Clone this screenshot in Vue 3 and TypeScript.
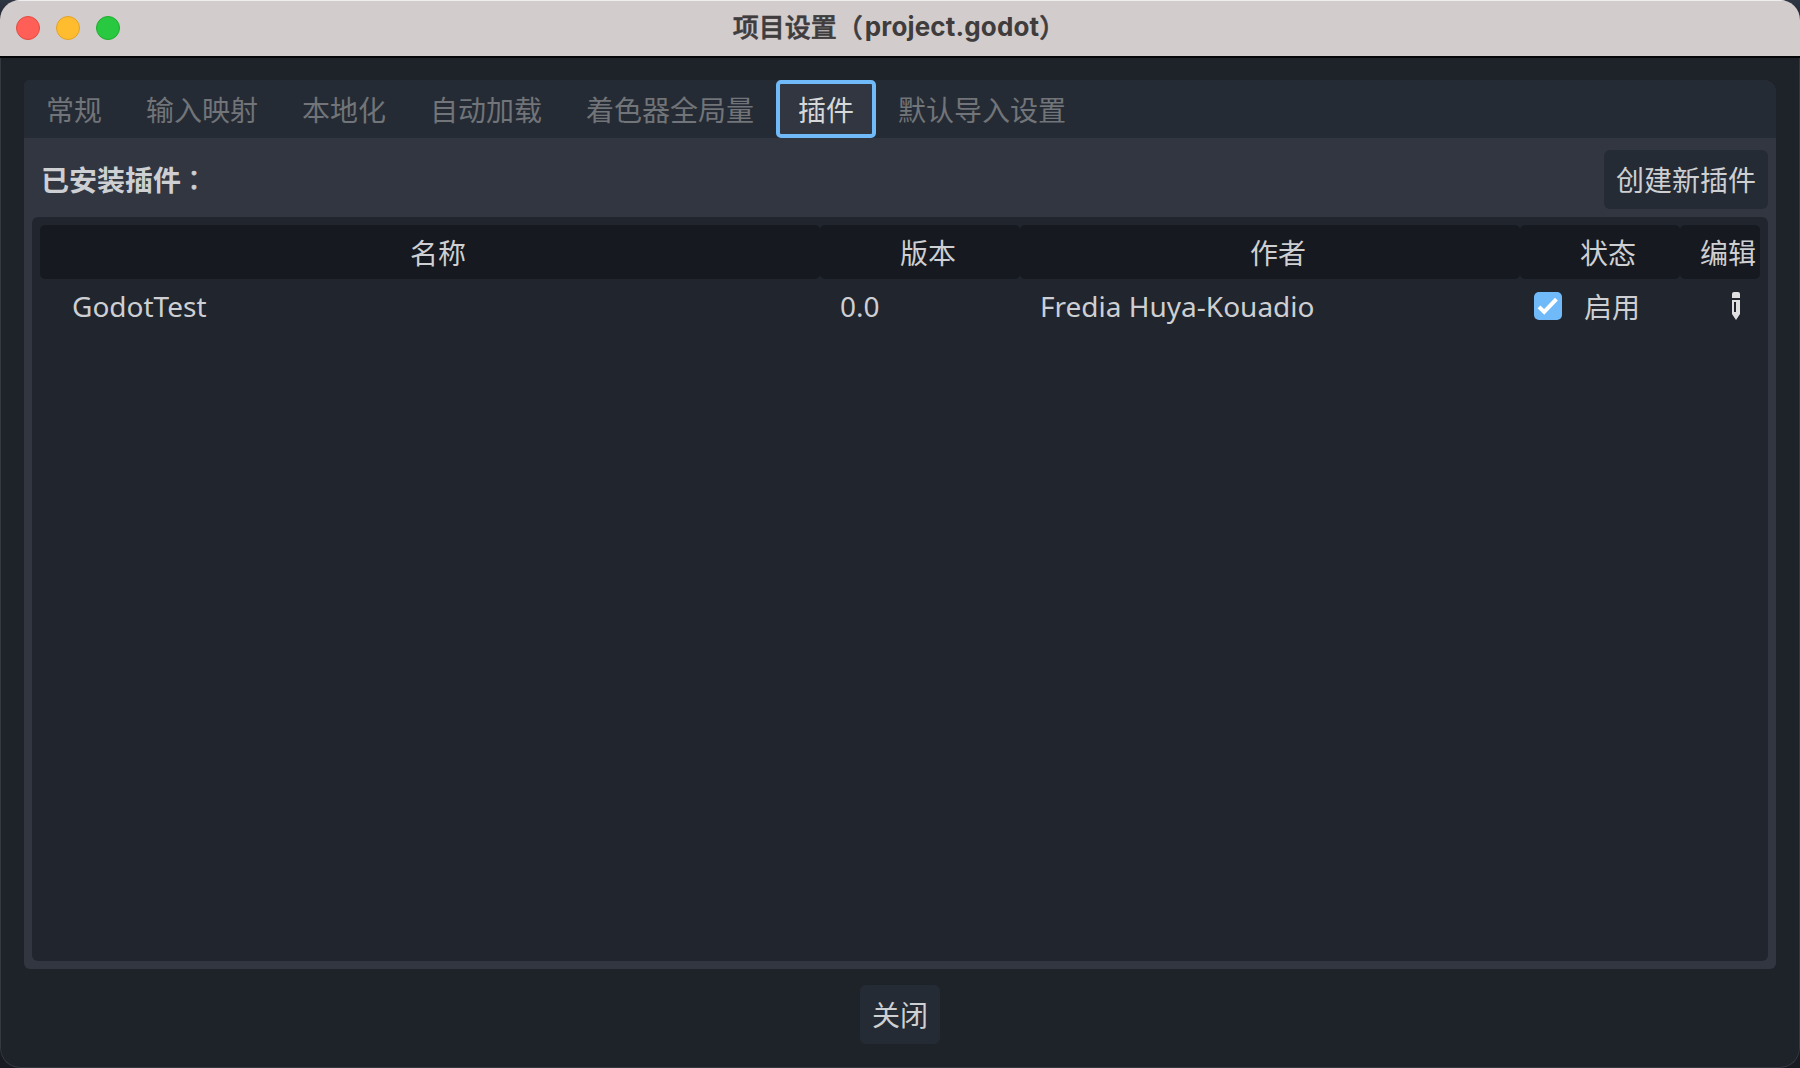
<script setup lang="ts">
interface Plugin {
  name: string
  version: string
  author: string
  enabled: boolean
}

const tabs: string[] = ['常规', '输入映射', '本地化', '自动加载', '着色器全局量', '插件', '默认导入设置']
const activeTab = '插件'
const columns: string[] = ['名称', '版本', '作者', '状态', '编辑']
const plugins: Plugin[] = [
  { name: 'GodotTest', version: '0.0', author: 'Fredia Huya-Kouadio', enabled: true },
]
</script>

<template>
  <div class="desktop">
    <div class="window">
      <header class="titlebar">
        <div class="lights">
          <span class="light red"></span>
          <span class="light yellow"></span>
          <span class="light green"></span>
        </div>
        <h1 class="title"><span class="lead">项目设置（</span><span class="file">project.godot</span><span>）</span></h1>
      </header>
      <main class="content">
        <section class="panel">
          <nav class="tabs">
            <div v-for="tab in tabs" :key="tab" class="tab" :class="{ active: tab === activeTab }">{{ tab }}</div>
          </nav>
          <div class="body">
            <div class="toolbar">
              <span class="heading">已安装插件<span class="colon">：</span></span>
              <button class="btn">创建新插件</button>
            </div>
            <div class="tree">
              <div class="grid head">
                <div v-for="c in columns" :key="c" class="th">{{ c }}</div>
              </div>
              <div v-for="p in plugins" :key="p.name" class="grid row">
                <div class="name">{{ p.name }}</div>
                <div class="cell">{{ p.version }}</div>
                <div class="cell">{{ p.author }}</div>
                <div class="status">
                  <svg width="28" height="28" viewBox="0 0 28 28">
                    <rect width="28" height="28" rx="5" fill="#70bafa" />
                    <path v-if="p.enabled" d="M5 14.8 10.2 20 22.4 7.2" fill="none" stroke="#fff" stroke-width="4" />
                  </svg>
                  <span class="state">启用</span>
                </div>
                <div class="edit">
                  <svg width="8" height="28" viewBox="0 0 8 28">
                    <path d="M2 0H6A2 2 0 0 1 8 2V6H0V2A2 2 0 0 1 2 0Z" fill="#e0e0e0" />
                    <path d="M0 8H8V22L4 28 0 22ZM2 10V20H4V10Z" fill="#e0e0e0" fill-rule="evenodd" />
                  </svg>
                </div>
              </div>
            </div>
          </div>
        </section>
        <button class="btn close">关闭</button>
      </main>
    </div>
  </div>
</template>

<style>
body {
  margin: 0;
  overflow: hidden;
}
</style>

<style scoped>
* {
  box-sizing: border-box;
}
.desktop {
  width: 1800px;
  height: 1068px;
  background: linear-gradient(#2e3543, #191b23 4%, #191b23);
  font: 28px/40px "Noto Sans", "Noto Sans CJK SC", sans-serif;
  color: #cdcfd2;
  white-space: nowrap;
}
.window {
  height: 1068px;
  display: flex;
  flex-direction: column;
  border-radius: 20px;
  overflow: hidden;
  background: #1e2229;
}
.titlebar {
  height: 58px;
  flex: none;
  display: grid;
  grid-template-columns: 1fr auto 1fr;
  align-items: center;
  padding-bottom: 1px;
  background: #d3cccd;
  border-top: 1px solid #efedee;
  border-bottom: 2px solid #050608;
}
.lights {
  display: flex;
  gap: 16px;
  padding-left: 16px;
}
.light {
  width: 24px;
  height: 24px;
  border-radius: 50%;
  border: 1px solid;
}
.red {
  background: #ff5f57;
  border-color: #e24b41;
}
.yellow {
  background: #febc2e;
  border-color: #e1a325;
}
.green {
  background: #28c840;
  border-color: #1dad2b;
}
.title {
  margin: 0;
  padding: 0 2px 3px 0;
  display: flex;
  font: 500 26px/40px "Noto Sans CJK SC", sans-serif;
  color: #3f3c3d;
}
.title > span {
  margin-top: -1px;
  -webkit-text-stroke: 0.6px #3f3c3d;
}
.title > .lead {
  margin-right: 2px;
}
.title > .file {
  margin-top: 0;
  font-family: Inter, sans-serif;
  font-weight: 700;
  letter-spacing: 0.15px;
  -webkit-text-stroke: 0;
}
.content {
  flex: 1;
  display: flex;
  flex-direction: column;
  align-items: center;
  padding: 22px 23px 0;
  border: solid #343940;
  border-width: 0 1px 1px;
  border-radius: 0 0 20px 20px;
}
.panel {
  width: 1752px;
  height: 889px;
  display: flex;
  flex-direction: column;
  background: #313641;
  border-radius: 6px 12px 6px 6px;
  overflow: hidden;
}
.tabs {
  height: 58px;
  flex: none;
  display: flex;
  background: #252b34;
}
.tab {
  height: 58px;
  padding: 0 22px;
  line-height: 60px;
  color: #717478;
}
.tab.active {
  padding: 0 18px;
  line-height: 52px;
  border: 4px solid #70bafa;
  border-radius: 5px;
  background: #313641;
  color: #d6d7d9;
}
.body {
  flex: 1;
  display: flex;
  flex-direction: column;
  gap: 8px;
  padding: 12px 8px 8px;
}
.toolbar {
  display: flex;
  justify-content: space-between;
  align-items: center;
  height: 59px;
}
.heading {
  padding: 0 0 1px 9px;
  font-weight: 700;
}
.colon {
  margin-left: -1px;
  font-family: "Noto Sans CJK TC", sans-serif;
  font-weight: 400;
  -webkit-text-stroke: 0.5px #cdcfd2;
}
.btn {
  height: 59px;
  margin: 0;
  padding: 0 12px;
  border: 0;
  border-radius: 6px;
  background: #252b34;
  color: inherit;
  font: inherit;
}
.tree {
  flex: 1;
  padding: 8px;
  background: #21252e;
  border-radius: 6px;
}
.grid {
  display: grid;
  grid-template-columns: 780px 200px 500px 160px 80px;
}
.th {
  height: 54px;
  padding-left: 16px;
  line-height: 56px;
  text-align: center;
  background: #16191f;
  border-radius: 5px;
}
.row {
  height: 54px;
  align-items: center;
}
.name {
  padding-left: 32px;
}
.cell {
  padding-left: 20px;
}
.status {
  display: flex;
  align-items: center;
  gap: 22px;
  padding-left: 14px;
}
.state {
  padding-top: 1px;
}
.edit {
  display: flex;
  padding-left: 52px;
}
.close {
  margin-top: 16px;
}
</style>
